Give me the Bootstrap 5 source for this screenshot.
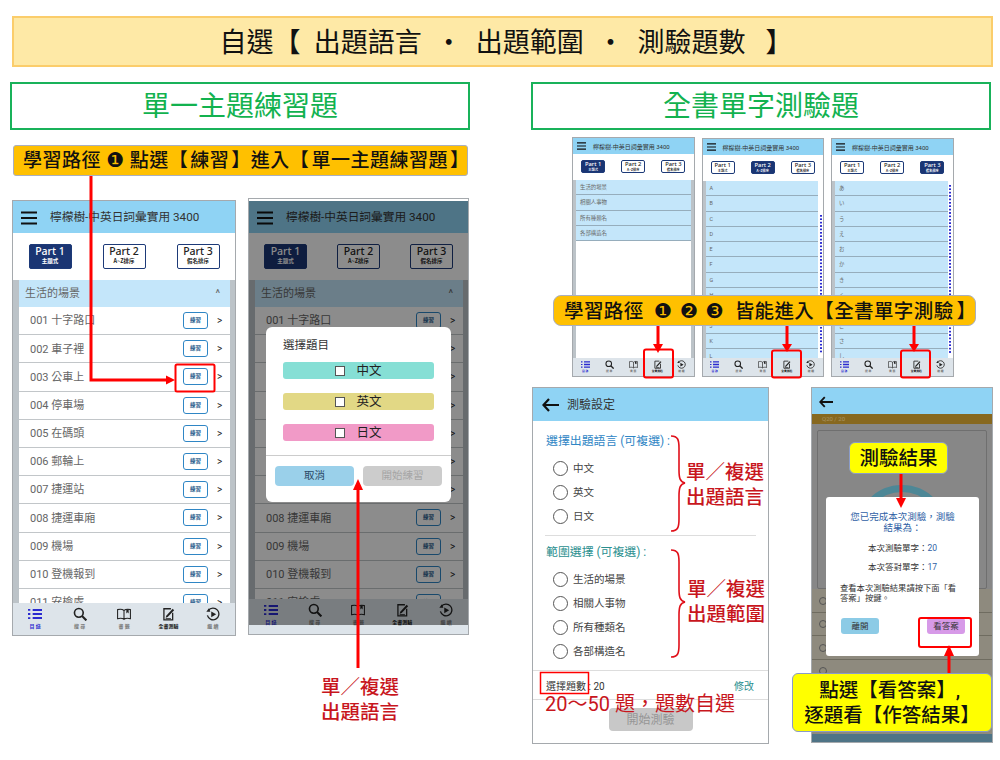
<!doctype html>
<html lang="zh-Hant">
<head>
  <meta charset="utf-8">
  <title>自選 出題語言 出題範圍 測驗題數</title>
  <link href="https://cdn.jsdelivr.net/npm/bootstrap@5.3.0/dist/css/bootstrap.min.css" rel="stylesheet">
  <style>
    body { margin: 0; background: #fff; font-family: Roboto, "Noto Sans CJK TC", sans-serif; color: #333; }
    .sheet { position: relative; width: 1000px; height: 760px; overflow: hidden; padding-top: 16px; }

    .top-banner { margin-left: 12px; width: 981px; height: 51px; padding: 3px 0 0 7px; background: #fee9a6; border: 2px solid #fbcd6b; font-size: 27px; color: #111; white-space: pre; }
    .left-col { margin-left: 10px; width: 460px; margin-top: 15px; }
    .right-col { margin-left: 61px; width: 462px; margin-top: 15px; }
    .green-title { height: 48px; width: 460px; padding-top: 2px; border: 2px solid #19b25a; color: #12b24f; font-size: 28px; line-height: 1; }

    .path-callout { background: #ffc000; border: 1px solid #a9afc0; border-radius: 3px; color: #111; font-weight: 500; white-space: pre; padding-top: 1px; }
    .path-one { margin: 15px 0 0 3px; width: 455px; height: 31px; padding-left: 9px; font-size: 19px; letter-spacing: .5px; }
    .path-two { position: absolute; left: 553px; top: 295px; width: 423px; height: 31px; padding-left: 10px; font-size: 19.5px; border-radius: 8px; letter-spacing: .4px; }
    .path-one .in-bracket { padding: 0 2px; }
    .path-two .in-bracket { padding: 0 3px 0 0; }
    .dingbat { font-family: "DejaVu Sans", sans-serif; font-size: 1.05em; }

    /* phone frames */
    .phone { position: relative; border: 1.5px solid #a5a9ad; background: #fff; overflow: hidden; }
    .phone-a { width: 224px; height: 436px; margin: 2px 0 0 2px; }
    .phone-b { width: 221px; height: 437px; margin-left: 12px; }
    .app-head { height: 32px; background: #8fd3f4; padding: 1px 0 0 8px; font-size: 11.7px; color: #333; flex: none; }
    .phone-b .app-head { margin-top: 2px; }
    .burger { width: 16px; height: 14px; margin-right: 13px; color: #111; flex: none; }
    .tab-row { height: 47px; padding-top: 11px; flex: none; }
    .part-tab { width: 43px; height: 25px; border: 1.5px solid #1d3a78; border-radius: 2px; color: #222; text-align: center; font: 500 10.5px/12px "Noto Sans", sans-serif; }
    .part-tab small { display: block; font: 700 5.5px/8px "Noto Sans CJK TC", sans-serif; }
    .part-tab.on { background: #1a3573; color: #fff; }
    .topic-list { background: #bcc3c8; padding: 0 5px 0 6px; flex: 1 1 0; overflow: hidden; min-height: 0; }
    .topic-head { height: 27px; background: #c4e6fa; padding: 2px 10px 0 6px; font-size: 11px; color: #666; }
    .lesson { height: 28.2px; padding: 0 0 0 11px; border: 0; border-bottom: 1.5px solid #c2c6c9; border-radius: 0 !important; font-size: 11px; color: #666; background: #fff; }
    .lesson-name { flex-grow: 1; padding-top: 2px; }
    .drill-btn { width: 25px; height: 17px; padding: 0; border: 1.5px solid #2f86c5; border-radius: 3px; font: 700 5.5px/14px "Noto Sans CJK TC", sans-serif; color: #2c5f8f; margin-right: 9px; flex: none; }
    .go-chev { width: 13px; font-size: 10px; color: #222; flex: none; }
    .foot-nav { background: #dde4ea; padding-top: 4px; flex: none; color: #333; }
    .phone-a .foot-nav { height: 32px; }
    .phone-b .foot-nav { height: 35px; }
    .nav-cell { flex: 1 1 0; text-align: center; font-size: 5px; line-height: 6px; font-weight: 700; color: #777; }
    .nav-cell svg { display: block; margin: 0 auto 2px; width: 14px; height: 14px; color: #222; }
    .nav-cell.on, .nav-cell.on svg { color: #2a2ad0; }
    .nav-cell.strong { color: #111; }

    .dim-layer { position: absolute; left: 0; right: 0; top: 2px; bottom: 9px; background: rgba(0,0,0,.45); }
    .pick-modal { position: absolute; left: 17px; top: 128px; width: 185px; height: 175px; background: #fff; border-radius: 6px; padding: 10px 17px 0; font-size: 11.5px; }
    .pick-bar { height: 17px; margin-bottom: 14px; padding-top: 1px; border-radius: 3px; font-size: 12.5px; color: #222; gap: 11px; }
    .pick-box { width: 10px; height: 10px; border: 1.5px solid #555; background: #fff; }
    .pick-rule { border-top: 1.5px solid #ccc; margin: 0 -17px; }
    .pick-btn { width: 79px; height: 20px; border-radius: 4px; font-size: 10.5px; }

    /* small phones */
    .mini-row { margin: 7px 0 0 41px; gap: 7px; }
    .mini { width: 122.5px; height: 240px; }
    .mini .app-head { height: 16px; padding: 0 0 0 4px; font-size: 6px; }
    .mini .burger { width: 9px; height: 8px; margin-right: 7px; }
    .mini .tab-row { height: 26px; padding-top: 6px; }
    .mini .part-tab { width: 24px; height: 13px; border-width: 1px; font-size: 5.8px; line-height: 7px; }
    .mini .part-tab small { font-size: 3.2px; line-height: 4px; }
    .mini-body { flex: 1 1 0; min-height: 0; overflow: hidden; }
    .mini-list { background: #bcc3c8; padding-left: 3px; overflow: hidden; flex: 1 1 0; min-height: 0; }
    .mini-plain { flex-grow: 1; padding: 0 3px; background: linear-gradient(90deg, #bcc3c8 3px, #fff 3px, #fff calc(100% - 3px), #bcc3c8 0); }
    .mini-item { height: 15.3px; background: #c4e6fa; border-bottom: 1px solid #96adbc; padding-left: 4px; font-size: 5.4px; line-height: 15px; color: #666; overflow: hidden; }
    .kana-index { width: 5px; flex: none; margin-bottom: 4px; background: linear-gradient(#2a2ad0 55%, transparent 0) center top / 2px 3.4px repeat-y; }
    .kana-low { margin-top: 34px; }
    .kana-high { margin-top: 4px; }
    .mini .foot-nav { height: 18px; padding-top: 2px; }
    .mini .nav-cell { font-size: 2.8px; line-height: 3px; }
    .mini .nav-cell svg { width: 9px; height: 9px; margin-bottom: 1px; }

    /* settings + result */
    .lower-row { margin: 10px 0 0 1px; gap: 42px; }
    .setup { width: 237px; height: 357px; }
    .setup .app-head { height: 33px; padding-left: 9px; font-size: 12px; flex: none; }
    .setup-back { width: 17px; height: 14px; margin-right: 8px; color: #111; }
    .setup-title { font-size: 11.9px; padding: 12px 0 0 13px; line-height: 16px; color: #2f86c5; }
    .setup-title.teal { color: #2b8f8f; padding-top: 8px; }
    .ring-row { height: 24px; padding-left: 20px; font-size: 10.5px; color: #444; gap: 5px; }
    .ring-row span:last-child { padding-top: 2px; }
    .ring { width: 15px; height: 15px; border: 1.5px solid #555; border-radius: 50%; flex: none; }
    .setup-rule { border-top: 1.5px solid #ddd; margin: 7px 12px 0; }
    .count-row { height: 30px; padding: 2px 14px 0 13px; margin-top: 7px; border-top: 1.5px solid #ddd; border-bottom: 1.5px solid #ddd; font-size: 10px; color: #333; }
    .count-row a { color: #2b8f8f; text-decoration: none; }
    .setup-go { width: 84px; height: 23px; margin: 8px auto 0; background: #c8c8c8; border-radius: 4px; color: #969696; font-size: 12px; }

    .result { width: 182px; height: 356px; background: #878787; }
    .result .app-head { height: 26px; padding-left: 7px; }
    .result-back { width: 14px; height: 12px; color: #111; }
    .q-strip { height: 10px; background: #87681f; color: #a89563; font-size: 6px; line-height: 10px; padding-left: 10px; }
    .q-card { position: relative; margin: 6px 5px 0; height: 161px; border: 1.5px solid #6f6f6f; border-radius: 2px; overflow: hidden; }
    .q-ring { position: absolute; left: 38px; top: 54px; width: 92px; height: 92px; border: 7px solid #4d8796; border-radius: 50%; }
    .opt-zone { background: #8e8a7e; height: 146px; }
    .opt-line { height: 23.5px; border-bottom: 1px solid #6f6c60; padding-left: 7px; }
    .opt-ring { width: 8px; height: 8px; border: 1px solid #555; border-radius: 50%; }
    .result-foot { height: 8px; background: #4f7486; }
    .done-modal { position: absolute; left: 14px; top: 109px; width: 153px; height: 159px; background: #fff; border-radius: 3px; font-size: 8.5px; color: #333; padding: 14px 14px 0; text-align: center; }
    .done-modal .lead-line { color: #2f5fa5; font-size: 9.5px; line-height: 11px; margin-bottom: 10px; }
    .done-modal .stat { line-height: 11px; margin-bottom: 8px; }
    .done-modal .stat b { color: #2f5fa5; font-weight: 400; }
    .done-modal .note { text-align: left; white-space: nowrap; line-height: 10px; margin-top: 10px; font-size: 8.3px; }
    .done-btn { width: 38px; height: 16px; border-radius: 3px; font-size: 8.5px; color: #333; }
    .done-btns { margin: 15px 0 0 1px; width: 124px; }

    /* notes over the pictures */
    .marks { position: absolute; left: 0; top: 0; width: 1000px; height: 760px; }
    .red-note { position: absolute; color: #c8161d; font-size: 19.5px; font-weight: 500; line-height: 25px; white-space: pre; }
    .yellow-tag { position: absolute; background: #ffff00; border: 1px solid #8a9bc8; border-radius: 6px; color: #111; font-weight: 500; font-size: 19.5px; line-height: 25px; text-align: center; }
    .tag-one { left: 849px; top: 442px; width: 99px; height: 32px; padding-top: 3px; }
    .tag-two { left: 792px; top: 673px; width: 200px; height: 59px; padding-top: 4px; }
  </style>
</head>
<body>

<svg width="0" height="0" class="position-absolute">
  <symbol id="i-burger" viewBox="0 0 16 14"><path d="M0 1.5H16M0 7H16M0 12.5H16" stroke="currentColor" stroke-width="2.2" fill="none"/></symbol>
  <symbol id="i-list" viewBox="0 0 24 24"><path d="M8 5H24M8 12H24M8 19H24" stroke="currentColor" stroke-width="3.4" fill="none"/><path d="M0 3.4H4V6.6H0ZM0 10.4H4V13.6H0ZM0 17.4H4V20.6H0Z" fill="currentColor"/></symbol>
  <symbol id="i-search" viewBox="0 0 24 24"><circle cx="10" cy="10" r="7.5" stroke="currentColor" stroke-width="2.8" fill="none"/><path d="M15.5 15.5L23 23" stroke="currentColor" stroke-width="3.6" fill="none"/></symbol>
  <symbol id="i-book" viewBox="0 0 24 24"><path d="M12 6C9 3.5 5 3.5 1 4.5V20C5 19 9 19 12 21C15 19 19 19 23 20V4.5C19 3.5 15 3.5 12 6ZM12 6V21" stroke="currentColor" stroke-width="1.8" fill="none"/><path d="M16 4V11L18 9L20 11V4Z" fill="currentColor"/></symbol>
  <symbol id="i-quiz" viewBox="0 0 24 24"><path d="M17 3H5V22H20V10" stroke="currentColor" stroke-width="2.2" fill="none"/><path d="M9 15L20 3L22.5 5.5L11.5 17L8 18.5Z" fill="currentColor"/><path d="M8 20H17" stroke="currentColor" stroke-width="1.6"/></symbol>
  <symbol id="i-resume" viewBox="0 0 24 24"><path d="M4 6A10 10 0 1 1 2.4 14.5" stroke="currentColor" stroke-width="2.2" fill="none"/><path d="M0.5 8L7.5 8L5 2Z" fill="currentColor"/><path d="M9 7.5L17.5 12.5L9 17.5Z" fill="currentColor"/></symbol>
  <symbol id="i-back" viewBox="0 0 17 14"><path d="M7 1L1.5 7L7 13M1.5 7H17" stroke="currentColor" stroke-width="2.2" fill="none"/></symbol>
</svg>

<div class="sheet">
  <div class="top-banner d-flex align-items-center justify-content-center">自選【  出題語言  ・  出題範圍  ・  測驗題數   】</div>

  <div class="d-flex align-items-start">
    <div class="left-col">
      <div class="green-title d-flex align-items-center justify-content-center">單一主題練習題</div>
      <div class="path-callout path-one d-flex align-items-center"><span>學習路徑 <span class="dingbat">❶</span> 點選【<span class="in-bracket">練習</span>】進入【<span class="in-bracket">單一主題練習題</span>】</span></div>

      <div class="d-flex align-items-start" style="margin-top: 22px">
        <div class="phone phone-a d-flex flex-column">
          <div class="app-head d-flex align-items-center"><svg class="burger"><use href="#i-burger"/></svg>檸檬樹-中英日詞彙實用 3400</div>
          <div class="tab-row d-flex justify-content-around">
            <div class="part-tab on">Part 1<small>主題式</small></div>
            <div class="part-tab">Part 2<small>A~Z排序</small></div>
            <div class="part-tab">Part 3<small>假名排序</small></div>
          </div>
          <div class="topic-list">
            <div class="topic-head d-flex align-items-center justify-content-between"><span>生活的場景</span><span>^</span></div>
            <div class="list-group">
              <div class="list-group-item d-flex align-items-center lesson"><span class="lesson-name">001 十字路口</span><span class="btn drill-btn">練習</span><span class="go-chev">&gt;</span></div>
              <div class="list-group-item d-flex align-items-center lesson"><span class="lesson-name">002 車子裡</span><span class="btn drill-btn">練習</span><span class="go-chev">&gt;</span></div>
              <div class="list-group-item d-flex align-items-center lesson"><span class="lesson-name">003 公車上</span><span class="btn drill-btn">練習</span><span class="go-chev">&gt;</span></div>
              <div class="list-group-item d-flex align-items-center lesson"><span class="lesson-name">004 停車場</span><span class="btn drill-btn">練習</span><span class="go-chev">&gt;</span></div>
              <div class="list-group-item d-flex align-items-center lesson"><span class="lesson-name">005 在碼頭</span><span class="btn drill-btn">練習</span><span class="go-chev">&gt;</span></div>
              <div class="list-group-item d-flex align-items-center lesson"><span class="lesson-name">006 郵輪上</span><span class="btn drill-btn">練習</span><span class="go-chev">&gt;</span></div>
              <div class="list-group-item d-flex align-items-center lesson"><span class="lesson-name">007 捷運站</span><span class="btn drill-btn">練習</span><span class="go-chev">&gt;</span></div>
              <div class="list-group-item d-flex align-items-center lesson"><span class="lesson-name">008 捷運車廂</span><span class="btn drill-btn">練習</span><span class="go-chev">&gt;</span></div>
              <div class="list-group-item d-flex align-items-center lesson"><span class="lesson-name">009 機場</span><span class="btn drill-btn">練習</span><span class="go-chev">&gt;</span></div>
              <div class="list-group-item d-flex align-items-center lesson"><span class="lesson-name">010 登機報到</span><span class="btn drill-btn">練習</span><span class="go-chev">&gt;</span></div>
              <div class="list-group-item d-flex align-items-center lesson"><span class="lesson-name">011 安檢處</span><span class="btn drill-btn">練習</span><span class="go-chev">&gt;</span></div>
            </div>
          </div>
          <div class="foot-nav d-flex">
            <div class="nav-cell on"><svg><use href="#i-list"/></svg>目 錄</div>
            <div class="nav-cell"><svg><use href="#i-search"/></svg>搜 尋</div>
            <div class="nav-cell"><svg><use href="#i-book"/></svg>書 籤</div>
            <div class="nav-cell strong"><svg><use href="#i-quiz"/></svg>全書測驗</div>
            <div class="nav-cell"><svg><use href="#i-resume"/></svg>繼 續</div>
          </div>
        </div>

        <div class="phone phone-b d-flex flex-column">
          <div class="app-head d-flex align-items-center"><svg class="burger"><use href="#i-burger"/></svg>檸檬樹-中英日詞彙實用 3400</div>
          <div class="tab-row d-flex justify-content-around">
            <div class="part-tab on">Part 1<small>主題式</small></div>
            <div class="part-tab">Part 2<small>A~Z排序</small></div>
            <div class="part-tab">Part 3<small>假名排序</small></div>
          </div>
          <div class="topic-list">
            <div class="topic-head d-flex align-items-center justify-content-between"><span>生活的場景</span><span>^</span></div>
            <div class="list-group">
              <div class="list-group-item d-flex align-items-center lesson"><span class="lesson-name">001 十字路口</span><span class="btn drill-btn">練習</span><span class="go-chev">&gt;</span></div>
              <div class="list-group-item d-flex align-items-center lesson"><span class="lesson-name">002 車子裡</span><span class="btn drill-btn">練習</span><span class="go-chev">&gt;</span></div>
              <div class="list-group-item d-flex align-items-center lesson"><span class="lesson-name">003 公車上</span><span class="btn drill-btn">練習</span><span class="go-chev">&gt;</span></div>
              <div class="list-group-item d-flex align-items-center lesson"><span class="lesson-name">004 停車場</span><span class="btn drill-btn">練習</span><span class="go-chev">&gt;</span></div>
              <div class="list-group-item d-flex align-items-center lesson"><span class="lesson-name">005 在碼頭</span><span class="btn drill-btn">練習</span><span class="go-chev">&gt;</span></div>
              <div class="list-group-item d-flex align-items-center lesson"><span class="lesson-name">006 郵輪上</span><span class="btn drill-btn">練習</span><span class="go-chev">&gt;</span></div>
              <div class="list-group-item d-flex align-items-center lesson"><span class="lesson-name">007 捷運站</span><span class="btn drill-btn">練習</span><span class="go-chev">&gt;</span></div>
              <div class="list-group-item d-flex align-items-center lesson"><span class="lesson-name">008 捷運車廂</span><span class="btn drill-btn">練習</span><span class="go-chev">&gt;</span></div>
              <div class="list-group-item d-flex align-items-center lesson"><span class="lesson-name">009 機場</span><span class="btn drill-btn">練習</span><span class="go-chev">&gt;</span></div>
              <div class="list-group-item d-flex align-items-center lesson"><span class="lesson-name">010 登機報到</span><span class="btn drill-btn">練習</span><span class="go-chev">&gt;</span></div>
              <div class="list-group-item d-flex align-items-center lesson"><span class="lesson-name">011 安檢處</span><span class="btn drill-btn">練習</span><span class="go-chev">&gt;</span></div>
            </div>
          </div>
          <div class="foot-nav d-flex">
            <div class="nav-cell on"><svg><use href="#i-list"/></svg>目 錄</div>
            <div class="nav-cell"><svg><use href="#i-search"/></svg>搜 尋</div>
            <div class="nav-cell"><svg><use href="#i-book"/></svg>書 籤</div>
            <div class="nav-cell strong"><svg><use href="#i-quiz"/></svg>全書測驗</div>
            <div class="nav-cell"><svg><use href="#i-resume"/></svg>繼 續</div>
          </div>
          <div class="dim-layer"></div>
          <div class="pick-modal">
            <div style="margin-bottom: 8px">選擇題目</div>
            <div class="pick-bar d-flex align-items-center justify-content-center" style="background: #86dfd5"><span class="pick-box"></span>中文</div>
            <div class="pick-bar d-flex align-items-center justify-content-center" style="background: #e2d885"><span class="pick-box"></span>英文</div>
            <div class="pick-bar d-flex align-items-center justify-content-center" style="background: #f19ac7"><span class="pick-box"></span>日文</div>
            <div class="pick-rule"></div>
            <div class="d-flex justify-content-between" style="margin: 10px -8px 0">
              <div class="pick-btn d-flex align-items-center justify-content-center" style="background: #9ad0ea; color: #2c4a66">取消</div>
              <div class="pick-btn d-flex align-items-center justify-content-center" style="background: #ccc; color: #a5a5a5">開始練習</div>
            </div>
          </div>
        </div>
      </div>
    </div>

    <div class="right-col">
      <div class="green-title d-flex align-items-center justify-content-center">全書單字測驗題</div>

      <div class="mini-row d-flex align-items-start">
        <div class="phone mini d-flex flex-column">
          <div class="app-head d-flex align-items-center"><svg class="burger"><use href="#i-burger"/></svg>檸檬樹-中英日詞彙實用 3400</div>
          <div class="tab-row d-flex justify-content-around">
            <div class="part-tab on">Part 1<small>主題式</small></div>
            <div class="part-tab">Part 2<small>A~Z排序</small></div>
            <div class="part-tab">Part 3<small>假名排序</small></div>
          </div>
          <div class="mini-body d-flex"><div class="mini-plain">
            <div class="mini-item">生活的場景</div><div class="mini-item">相關人事物</div><div class="mini-item">所有種類名</div><div class="mini-item">各部構造名</div>
          </div></div>
          <div class="foot-nav d-flex">
            <div class="nav-cell on"><svg><use href="#i-list"/></svg>目 錄</div>
            <div class="nav-cell"><svg><use href="#i-search"/></svg>搜 尋</div>
            <div class="nav-cell"><svg><use href="#i-book"/></svg>書 籤</div>
            <div class="nav-cell strong"><svg><use href="#i-quiz"/></svg>全書測驗</div>
            <div class="nav-cell"><svg><use href="#i-resume"/></svg>繼 續</div>
          </div>
        </div>

        <div class="phone mini d-flex flex-column" style="margin-top: 1px; height: 239px">
          <div class="app-head d-flex align-items-center"><svg class="burger"><use href="#i-burger"/></svg>檸檬樹-中英日詞彙實用 3400</div>
          <div class="tab-row d-flex justify-content-around">
            <div class="part-tab">Part 1<small>主題式</small></div>
            <div class="part-tab on">Part 2<small>A~Z排序</small></div>
            <div class="part-tab">Part 3<small>假名排序</small></div>
          </div>
          <div class="mini-body d-flex">
            <div class="mini-list">
              <div class="mini-item">A</div><div class="mini-item">B</div><div class="mini-item">C</div><div class="mini-item">D</div><div class="mini-item">E</div><div class="mini-item">F</div><div class="mini-item">G</div><div class="mini-item">H</div><div class="mini-item">I</div><div class="mini-item">J</div><div class="mini-item">K</div><div class="mini-item">L</div>
            </div>
            <div class="kana-index kana-low"></div>
          </div>
          <div class="foot-nav d-flex">
            <div class="nav-cell on"><svg><use href="#i-list"/></svg>目 錄</div>
            <div class="nav-cell"><svg><use href="#i-search"/></svg>搜 尋</div>
            <div class="nav-cell"><svg><use href="#i-book"/></svg>書 籤</div>
            <div class="nav-cell strong"><svg><use href="#i-quiz"/></svg>全書測驗</div>
            <div class="nav-cell"><svg><use href="#i-resume"/></svg>繼 續</div>
          </div>
        </div>

        <div class="phone mini d-flex flex-column" style="margin-top: 1px; height: 239px">
          <div class="app-head d-flex align-items-center"><svg class="burger"><use href="#i-burger"/></svg>檸檬樹-中英日詞彙實用 3400</div>
          <div class="tab-row d-flex justify-content-around">
            <div class="part-tab">Part 1<small>主題式</small></div>
            <div class="part-tab">Part 2<small>A~Z排序</small></div>
            <div class="part-tab on">Part 3<small>假名排序</small></div>
          </div>
          <div class="mini-body d-flex">
            <div class="mini-list">
              <div class="mini-item">あ</div><div class="mini-item">い</div><div class="mini-item">う</div><div class="mini-item">え</div><div class="mini-item">お</div><div class="mini-item">か</div><div class="mini-item">き</div><div class="mini-item">く</div><div class="mini-item">け</div><div class="mini-item">こ</div><div class="mini-item">さ</div><div class="mini-item">し</div>
            </div>
            <div class="kana-index kana-high"></div>
          </div>
          <div class="foot-nav d-flex">
            <div class="nav-cell on"><svg><use href="#i-list"/></svg>目 錄</div>
            <div class="nav-cell"><svg><use href="#i-search"/></svg>搜 尋</div>
            <div class="nav-cell"><svg><use href="#i-book"/></svg>書 籤</div>
            <div class="nav-cell strong"><svg><use href="#i-quiz"/></svg>全書測驗</div>
            <div class="nav-cell"><svg><use href="#i-resume"/></svg>繼 續</div>
          </div>
        </div>
      </div>

      <div class="lower-row d-flex align-items-start">
        <div class="phone setup d-flex flex-column">
          <div class="app-head d-flex align-items-center"><svg class="setup-back"><use href="#i-back"/></svg>測驗設定</div>
          <div class="setup-title">選擇出題語言 (可複選) :</div>
          <div style="margin-top: 7px">
            <div class="ring-row d-flex align-items-center"><span class="ring"></span><span>中文</span></div>
            <div class="ring-row d-flex align-items-center"><span class="ring"></span><span>英文</span></div>
            <div class="ring-row d-flex align-items-center"><span class="ring"></span><span>日文</span></div>
          </div>
          <div class="setup-rule"></div>
          <div class="setup-title teal">範圍選擇 (可複選) :</div>
          <div style="margin-top: 7px">
            <div class="ring-row d-flex align-items-center"><span class="ring"></span><span>生活的場景</span></div>
            <div class="ring-row d-flex align-items-center"><span class="ring"></span><span>相關人事物</span></div>
            <div class="ring-row d-flex align-items-center"><span class="ring"></span><span>所有種類名</span></div>
            <div class="ring-row d-flex align-items-center"><span class="ring"></span><span>各部構造名</span></div>
          </div>
          <div class="count-row d-flex align-items-center justify-content-between"><span>選擇題數 : 20</span><a href="#">修改</a></div>
          <div class="setup-go d-flex align-items-center justify-content-center">開始測驗</div>
        </div>

        <div class="phone result d-flex flex-column">
          <div class="app-head d-flex align-items-center"><svg class="result-back"><use href="#i-back"/></svg></div>
          <div class="q-strip">Q20 / 20</div>
          <div class="q-card"><div class="q-ring"></div></div>
          <div class="opt-zone">
            <div class="opt-line d-flex align-items-center"><span class="opt-ring"></span></div>
            <div class="opt-line d-flex align-items-center"><span class="opt-ring"></span></div>
            <div class="opt-line d-flex align-items-center"><span class="opt-ring"></span></div>
            <div class="opt-line d-flex align-items-center"><span class="opt-ring"></span></div>
          </div>
          <div class="result-foot mt-auto"></div>
          <div class="done-modal">
            <div class="lead-line">您已完成本次測驗，測驗<br>結果為：</div>
            <div class="stat">本次測驗單字：<b>20</b></div>
            <div class="stat">本次答對單字：<b>17</b></div>
            <div class="note">查看本次測驗結果請按下面「看<br>答案」按鍵。</div>
            <div class="done-btns d-flex justify-content-between">
              <div class="done-btn d-flex align-items-center justify-content-center" style="background: #8ccbe6">離開</div>
              <div class="done-btn d-flex align-items-center justify-content-center" style="background: #d79ae8">看答案</div>
            </div>
          </div>
        </div>
      </div>
    </div>
  </div>

  <div class="path-callout path-two d-flex align-items-center"><span>學習路徑  <span class="dingbat">❶ ❷ ❸</span>  皆能進入【<span class="in-bracket">全書單字測驗</span>】</span></div>

  <svg class="marks" viewBox="0 0 1000 760" fill="none">
    <g stroke="#f00">
      <path d="M91 176V380H168" stroke-width="3"/>
      <rect x="175.5" y="364.5" width="39" height="27" rx="1.5" stroke-width="2"/>
      <path d="M358 668V490" stroke-width="3"/>
      <path d="M658 326V345M787 326V345M914 326V345" stroke-width="3"/>
      <rect x="644" y="349.5" width="29" height="28" rx="2" stroke-width="2"/>
      <rect x="772" y="350.5" width="29" height="27" rx="2" stroke-width="2"/>
      <rect x="901" y="350.5" width="29" height="27" rx="2" stroke-width="2"/>
      <path d="M901 474V500" stroke-width="3"/>
      <rect x="919" y="618" width="52" height="29" rx="2" stroke-width="2"/>
      <path d="M949 673V655" stroke-width="3"/>
      <rect x="540.5" y="672.5" width="48" height="21" stroke-width="1.5"/>
      <path d="M671 436C678 436 679 440 679 448V470C679 478 680 482 685 483C680 484 679 488 679 496V519C679 527 678 531 671 531" stroke-width="1.6" stroke="#e0101a"/>
      <path d="M671 550C678 550 679 554 679 562V589C679 597 680 601 685 602C680 603 679 607 679 615V645C679 653 678 657 671 657" stroke-width="1.6" stroke="#e0101a"/>
    </g>
    <g fill="#f00">
      <path d="M166 375.5L175 380L166 384.5Z"/>
      <path d="M353 490L358 479L363 490Z"/>
      <path d="M653 344H663L658 353ZM782 344H792L787 352ZM909 344H919L914 352Z"/>
      <path d="M896 498H906L901 508Z"/>
      <path d="M944 656H954L949 645Z"/>
    </g>
  </svg>

  <div class="red-note" style="left: 321px; top: 675px">單／複選
出題語言</div>
  <div class="red-note" style="left: 686px; top: 460px">單／複選
出題語言</div>
  <div class="red-note" style="left: 687px; top: 577px">單／複選
出題範圍</div>
  <div class="red-note" style="left: 545px; top: 692px; font-size: 20px; font-weight: 400">20～50 題，題數自選</div>

  <div class="yellow-tag tag-one">測驗結果</div>
  <div class="yellow-tag tag-two">點選【看答案】,&nbsp;<br>逐題看【作答結果】</div>
</div>

<script src="https://cdn.jsdelivr.net/npm/bootstrap@5.3.0/dist/js/bootstrap.bundle.min.js"></script>
</body>
</html>
